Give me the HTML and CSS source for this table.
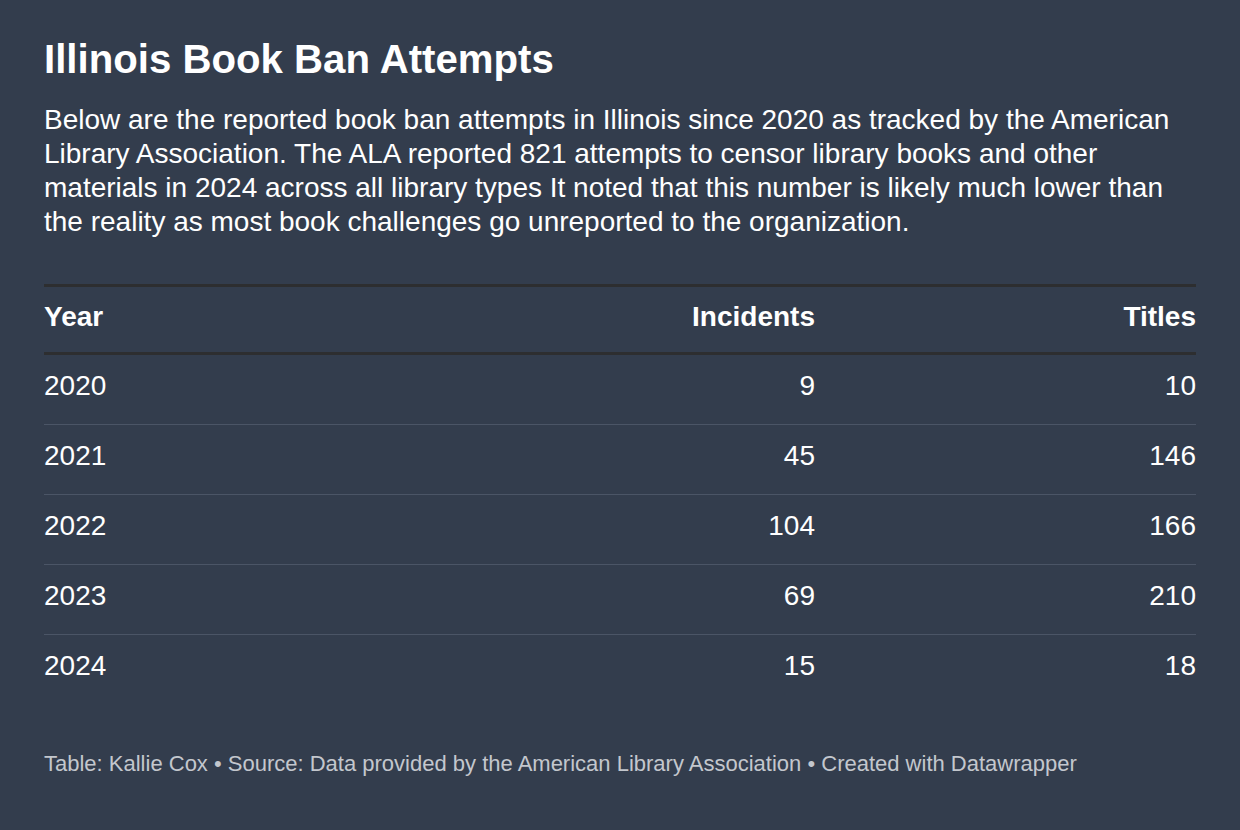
FILE: index.html
```html
<!DOCTYPE html>
<html>
<head>
<meta charset="utf-8">
<link rel="stylesheet" href="styles.css">
</head>
<body>
<div class="chart">
  <h1 class="title">Illinois Book Ban Attempts</h1>
  <p class="desc">Below are the reported book ban attempts in Illinois since 2020 as tracked by the American Library Association. The ALA reported 821 attempts to censor library books and other materials in 2024 across all library types It noted that this number is likely much lower than the reality as most book challenges go unreported to the organization.</p>
  <div class="table">
    <div class="row head">
      <div class="cell">Year</div>
      <div class="cell num">Incidents</div>
      <div class="cell num">Titles</div>
    </div>
    <div class="row">
      <div class="cell">2020</div><div class="cell num">9</div><div class="cell num">10</div>
    </div>
    <div class="row">
      <div class="cell">2021</div><div class="cell num">45</div><div class="cell num">146</div>
    </div>
    <div class="row">
      <div class="cell">2022</div><div class="cell num">104</div><div class="cell num">166</div>
    </div>
    <div class="row">
      <div class="cell">2023</div><div class="cell num">69</div><div class="cell num">210</div>
    </div>
    <div class="row last">
      <div class="cell">2024</div><div class="cell num">15</div><div class="cell num">18</div>
    </div>
  </div>
  <p class="footer">Table: Kallie Cox • Source: Data provided by the American Library Association • Created with Datawrapper</p>
</div>
</body>
</html>
```
FILE: styles.css
```css
html, body {
  margin: 0;
  padding: 0;
  background: #333d4d;
}
body {
  font-family: "Liberation Sans", Arial, sans-serif;
  color: #ffffff;
  width: 1240px;
  height: 830px;
  overflow: hidden;
}
.chart {
  padding: 36px 44px 0 44px;
}
.title {
  margin: 0;
  font-size: 40.2px;
  font-weight: 700;
  letter-spacing: 0;
  line-height: 48px;
}
.desc {
  margin: 19px 0 0 0;
  font-size: 28px;
  line-height: 34px;
}
.table {
  margin-top: 45px;
  border-top: 3px solid #2d2e30;
}
.row {
  display: grid;
  grid-template-columns: 1fr 386px 381px;
  padding: 14px 0 21px 0;
  line-height: 34px;
  border-bottom: 1px solid #4b5566;
  font-size: 28px;
}
.row.head {
  padding: 13px 0 18px 0;
  border-bottom: 3px solid #2d2e30;
  font-weight: 700;
}
.row.last {
  border-bottom: none;
}
.num {
  text-align: right;
}
.footer {
  margin: 47px 0 0 0;
  font-size: 22px;
  line-height: 26px;
  color: #c3c7cd;
}
```
